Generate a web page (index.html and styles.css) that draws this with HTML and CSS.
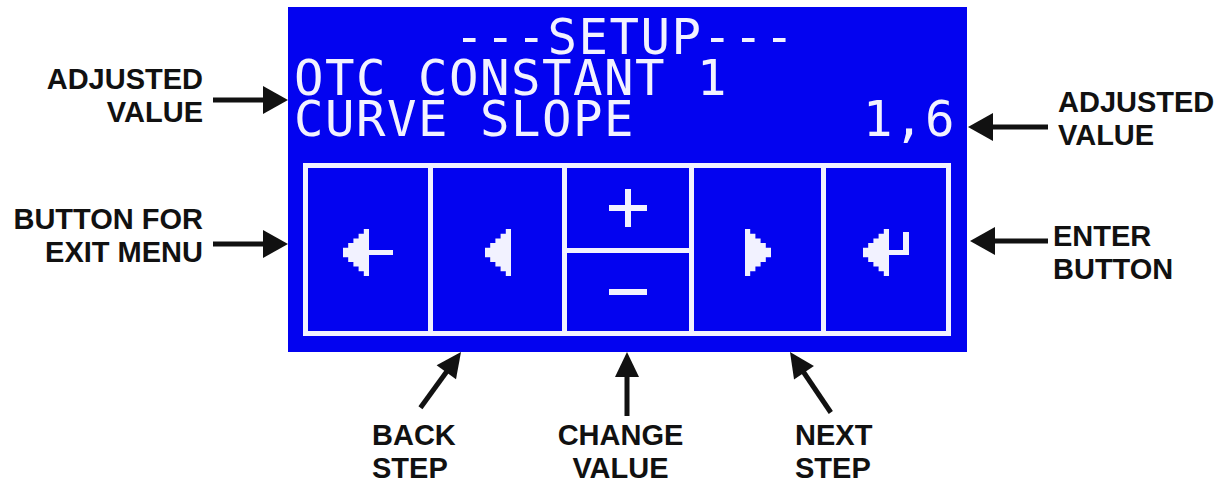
FILE: index.html
```html
<!DOCTYPE html>
<html lang="en">
<head>
    <meta charset="UTF-8">
    <meta name="viewport" content="width=device-width, initial-scale=1.0">
    <title>Setup Menu</title>
    <link rel="stylesheet" href="styles.css">
</head>
<body>
    <div class="figure">
        <div class="notes notes-left">
            <div class="note note-value">
                <p class="note-text">ADJUSTED<br>VALUE</p>
                <svg class="arrow-side" width="75" height="30" viewBox="0 0 75 30">
                    <rect x="0" y="12.5" width="52" height="5"/>
                    <polygon points="50,1 75,15 50,29"/>
                </svg>
            </div>
            <div class="note note-exit">
                <p class="note-text">BUTTON FOR<br>EXIT MENU</p>
                <svg class="arrow-side" width="75" height="30" viewBox="0 0 75 30">
                    <rect x="0" y="12.5" width="52" height="5"/>
                    <polygon points="50,1 75,15 50,29"/>
                </svg>
            </div>
        </div>

        <div class="lcd">
            <div class="lcd-screen">
                <div class="lcd-line lcd-title">---SETUP---</div>
                <div class="lcd-line">OTC CONSTANT 1</div>
                <div class="lcd-line lcd-row"><span>CURVE SLOPE</span><span>1,6</span></div>
            </div>
            <div class="keys">
                <div class="key">
                    <svg class="key-icon" width="50" height="47" viewBox="0 0 50 47">
                        <polygon points="20.8,0 26,0 26,47 20.8,47 20.8,42.3 15.6,42.3 15.6,37.6 10.4,37.6 10.4,32.9 5.2,32.9 5.2,28.2 0,28.2 0,18.8 5.2,18.8 5.2,14.1 10.4,14.1 10.4,9.4 15.6,9.4 15.6,4.7 20.8,4.7"/>
                        <rect x="25" y="21" width="25" height="5"/>
                    </svg>
                </div>
                <div class="key">
                    <svg class="key-icon" width="26" height="47" viewBox="0 0 26 47">
                        <polygon points="20.8,0 26,0 26,47 20.8,47 20.8,42.3 15.6,42.3 15.6,37.6 10.4,37.6 10.4,32.9 5.2,32.9 5.2,28.2 0,28.2 0,18.8 5.2,18.8 5.2,14.1 10.4,14.1 10.4,9.4 15.6,9.4 15.6,4.7 20.8,4.7"/>
                    </svg>
                </div>
                <div class="key-split">
                    <div class="key">
                        <svg width="38" height="38" viewBox="0 0 38 38">
                            <rect x="0" y="16" width="38" height="6"/>
                            <rect x="16" y="0" width="6" height="38"/>
                        </svg>
                    </div>
                    <div class="key">
                        <svg width="38" height="6" viewBox="0 0 38 6">
                            <rect x="0" y="0" width="38" height="6"/>
                        </svg>
                    </div>
                </div>
                <div class="key">
                    <svg class="key-icon" width="26" height="47" viewBox="0 0 26 47">
                        <polygon transform="matrix(-1 0 0 1 26 0)" points="20.8,0 26,0 26,47 20.8,47 20.8,42.3 15.6,42.3 15.6,37.6 10.4,37.6 10.4,32.9 5.2,32.9 5.2,28.2 0,28.2 0,18.8 5.2,18.8 5.2,14.1 10.4,14.1 10.4,9.4 15.6,9.4 15.6,4.7 20.8,4.7"/>
                    </svg>
                </div>
                <div class="key">
                    <svg class="key-icon" width="46" height="47" viewBox="0 0 46 47">
                        <polygon points="20.8,0 26,0 26,47 20.8,47 20.8,42.3 15.6,42.3 15.6,37.6 10.4,37.6 10.4,32.9 5.2,32.9 5.2,28.2 0,28.2 0,18.8 5.2,18.8 5.2,14.1 10.4,14.1 10.4,9.4 15.6,9.4 15.6,4.7 20.8,4.7"/>
                        <rect x="25" y="21" width="21" height="5"/>
                        <rect x="40" y="3" width="6" height="23"/>
                    </svg>
                </div>
            </div>
        </div>

        <div class="notes notes-right">
            <div class="note note-value-r">
                <svg class="arrow-side" width="81" height="30" viewBox="0 0 81 30">
                    <polygon points="1,15 26,1 26,29"/>
                    <rect x="24" y="12.5" width="57" height="5"/>
                </svg>
                <p class="note-text">ADJUSTED<br>VALUE</p>
            </div>
            <div class="note note-enter">
                <svg class="arrow-side" width="81" height="30" viewBox="0 0 81 30">
                    <polygon points="3,15 28,1 28,29"/>
                    <rect x="26" y="12.5" width="55" height="5"/>
                </svg>
                <p class="note-text">ENTER<br>BUTTON</p>
            </div>
        </div>
    </div>

    <div class="pointers">
        <div class="pointer pointer-back">
            <svg width="110" height="67" viewBox="0 0 110 67">
                <g transform="translate(96 0) rotate(36)">
                    <polygon points="0,0 -12,25 12,25"/>
                    <rect x="-2.5" y="22" width="5" height="47"/>
                </g>
            </svg>
            <p class="pointer-text">BACK<br>STEP</p>
        </div>
        <div class="pointer pointer-change">
            <svg width="145" height="67" viewBox="0 0 145 67">
                <g transform="translate(79 0)">
                    <polygon points="0,0 -12,25 12,25"/>
                    <rect x="-2.5" y="22" width="5" height="42"/>
                </g>
            </svg>
            <p class="pointer-text">CHANGE<br>VALUE</p>
        </div>
        <div class="pointer pointer-next">
            <svg width="95" height="67" viewBox="0 0 95 67">
                <g transform="translate(5 0) rotate(-34)">
                    <polygon points="0,0 -12,25 12,25"/>
                    <rect x="-2.5" y="22" width="5" height="51"/>
                </g>
            </svg>
            <p class="pointer-text">NEXT<br>STEP</p>
        </div>
    </div>
</body>
</html>
```

FILE: styles.css
```css
body {
    margin: 0;
    background-color: #fff;
    color: #111;
    font-family: "Liberation Sans", Arial, sans-serif;
}

.figure {
    display: flex;
    align-items: flex-start;
    padding-top: 7px;
}

/* callouts on both sides */
.notes {
    display: flex;
    flex-direction: column;
}

.notes-left {
    width: 288px;
    align-items: flex-end;
    padding-top: 56px;
}

.notes-right {
    flex: 1;
    padding-top: 79px;
}

.note {
    display: flex;
    align-items: flex-start;
}

.note-text {
    margin: 0;
    font-weight: bold;
    font-size: 29px;
    line-height: 33px;
}

.notes-left .note-text {
    text-align: right;
    margin-right: 10px;
}

.notes-right .note-text {
    margin-left: 10px;
}

.arrow-side {
    display: block;
    fill: #111;
}

.note-value .arrow-side {
    margin-top: 22px;
}

.note-exit {
    margin-top: 74px;
}

.note-exit .arrow-side {
    margin-top: 26px;
}

.note-value-r .arrow-side {
    margin-top: 26px;
}

.note-enter {
    margin-top: 68px;
}

.note-enter .arrow-side {
    margin-top: 6px;
}

.note-enter .note-text {
    margin-left: 5px;
}

/* display panel */
.lcd {
    width: 679px;
    height: 345px;
    box-sizing: border-box;
    background-color: #0303f0;
    padding: 10px 0 16px;
}

.lcd-screen {
    padding: 0 11px 0 6px;
}

.lcd-line {
    font-family: "DejaVu Sans Mono", monospace;
    font-size: 49px;
    line-height: 41px;
    letter-spacing: 1.5px;
    color: #f2f2ff;
    white-space: pre;
}

.lcd-title {
    text-align: center;
}

.lcd-row {
    display: flex;
    justify-content: space-between;
}

.keys {
    display: grid;
    grid-template-columns: 120px 129px 122px 127px 120px;
    gap: 5px;
    height: 173px;
    box-sizing: border-box;
    margin: 23px 16px 0 15px;
    padding: 5px;
    background-color: #f2f2ff;
}

.key {
    display: flex;
    align-items: center;
    justify-content: center;
    background-color: #0303f0;
}

.key svg {
    fill: #f2f2ff;
}

.key-icon {
    margin-top: 6px;
}

.key-split {
    display: grid;
    grid-template-rows: 80px 78px;
    gap: 5px;
}

/* pointers under the panel */
.pointers {
    display: flex;
    padding-left: 365px;
}

.pointer svg {
    display: block;
    fill: #111;
}

.pointer-text {
    margin: 0;
    font-weight: bold;
    font-size: 29px;
    line-height: 33px;
}

.pointer-back {
    width: 110px;
}

.pointer-back .pointer-text {
    padding-left: 7px;
}

.pointer-change {
    width: 145px;
    margin-left: 73px;
}

.pointer-change .pointer-text {
    text-align: center;
}

.pointer-next {
    width: 95px;
    margin-left: 92px;
}

.pointer-next .pointer-text {
    padding-left: 10px;
}
```
